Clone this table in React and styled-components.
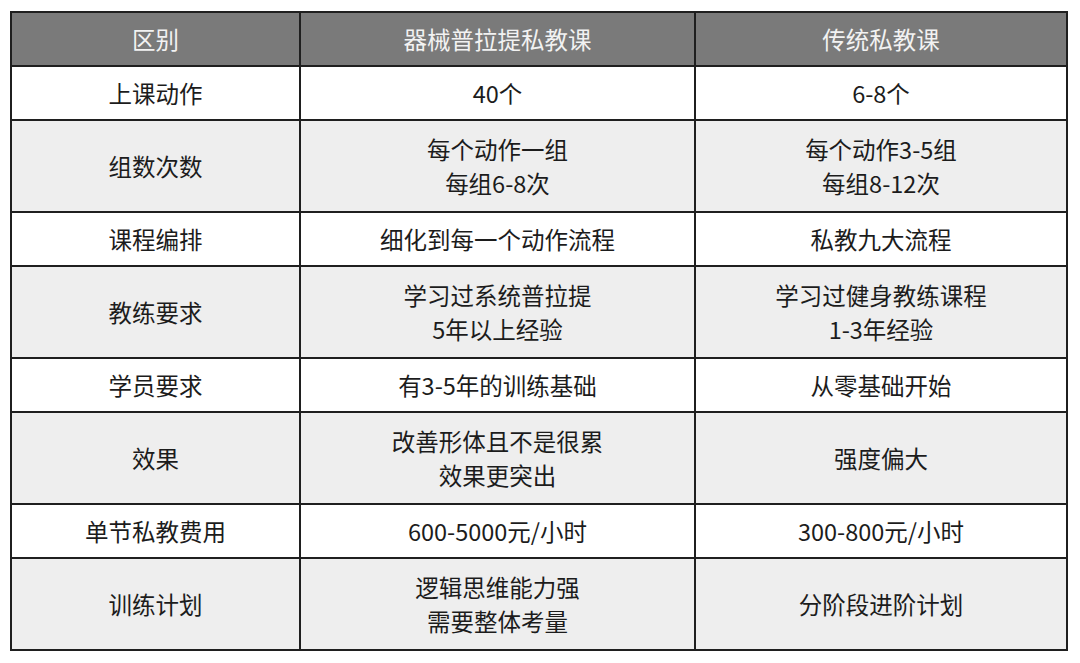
import React from 'react'
import styled, { createGlobalStyle } from 'styled-components'

const GlobalStyle = createGlobalStyle`
  html, body {
    margin: 0;
    padding: 0;
    background: #ffffff;
  }
  body {
    font-family: "Noto Sans CJK SC", "Noto Sans", sans-serif;
  }
`

const Page = styled.div`
  width: 1080px;
  height: 663px;
  padding: 11px 0 0 10px;
  box-sizing: border-box;
  background: #ffffff;
`

const Table = styled.div`
  display: grid;
  grid-template-columns: 287px 393px 370px;
  gap: 2px;
  padding: 2px;
  width: max-content;
  background: #1f1f1f;
`

const Cell = styled.div`
  display: flex;
  flex-direction: column;
  align-items: center;
  justify-content: center;
  padding: ${p => (p.$lines > 1 ? '11px 12px' : '9px 12px')};
  font-size: 23.5px;
  line-height: 34px;
  text-align: center;
  color: ${p => (p.$head ? '#f2f2f2' : '#1c1c1c')};
  background: ${p => (p.$head ? '#7a7a7a' : p.$shade ? '#eeeeee' : '#ffffff')};
`

const header = ['区别', '器械普拉提私教课', '传统私教课']

const rows = [
  ['上课动作', ['40个'], ['6-8个']],
  ['组数次数', ['每个动作一组', '每组6-8次'], ['每个动作3-5组', '每组8-12次']],
  ['课程编排', ['细化到每一个动作流程'], ['私教九大流程']],
  ['教练要求', ['学习过系统普拉提', '5年以上经验'], ['学习过健身教练课程', '1-3年经验']],
  ['学员要求', ['有3-5年的训练基础'], ['从零基础开始']],
  ['效果', ['改善形体且不是很累', '效果更突出'], ['强度偏大']],
  ['单节私教费用', ['600-5000元/小时'], ['300-800元/小时']],
  ['训练计划', ['逻辑思维能力强', '需要整体考量'], ['分阶段进阶计划']],
]

export default function App() {
  return (
    <Page>
      <GlobalStyle />
      <Table>
        {header.map(h => (
          <Cell key={h} $head $lines={1}>
            {h}
          </Cell>
        ))}
        {rows.map(([label, a, b], i) => {
          const lines = Math.max(a.length, b.length)
          const shade = i % 2 === 1
          return (
            <React.Fragment key={label}>
              <Cell $shade={shade} $lines={lines}>{label}</Cell>
              <Cell $shade={shade} $lines={lines}>
                {a.map(t => (
                  <span key={t}>{t}</span>
                ))}
              </Cell>
              <Cell $shade={shade} $lines={lines}>
                {b.map(t => (
                  <span key={t}>{t}</span>
                ))}
              </Cell>
            </React.Fragment>
          )
        })}
      </Table>
    </Page>
  )
}
